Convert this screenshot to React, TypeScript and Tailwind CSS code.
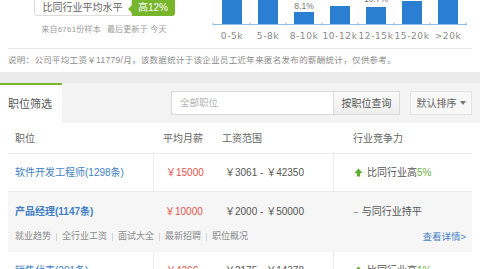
import React from 'react';

const bars = [
  { label: '0-5k', top: -12, pct: '' },
  { label: '5-8k', top: -12, pct: '' },
  { label: '8-10k', top: 12, pct: '8.1%' },
  { label: '10-12k', top: 6, pct: '' },
  { label: '12-15k', top: 7, pct: '10.7%' },
  { label: '15-20k', top: 1, pct: '' },
  { label: '>20k', top: -3, pct: '' },
];

const rows = [
  { title: '软件开发工程师(1298条)', avg: '￥15000', range: '￥3061 - ￥42350', trend: 'up', note: '比同行业高', pct: '5%' },
  { title: '产品经理(1147条)', avg: '￥10000', range: '￥2000 - ￥50000', trend: 'flat', note: '与同行业持平', pct: '', open: true },
  { title: '销售代表(201条)', avg: '￥4266', range: '￥2175 - ￥14378', trend: 'up', note: '比同行业高', pct: '1%' },
];

const subLinks = ['就业趋势', '全行业工资', '面试大全', '最新招聘', '职位概况'];

function SalaryChart() {
  const base = 24.5;
  return (
    <svg width="275" height="48" viewBox="0 0 275 48" className="block">
      <line x1="-12" y1="0" x2="-12" y2="44" stroke="#dcdcdc" strokeDasharray="1 2" />
      {bars.map((b, i) => {
        const cx = 27 + i * 36;
        return (
          <g key={b.label}>
            <rect x={cx - 10} y={b.top} width="20" height={base - b.top} fill="#2a7fd2" />
            {b.pct && (
              <text x={cx} y={i === 4 ? 2 : 9} textAnchor="middle" fontSize="8.5" fill="#777" fontFamily="Liberation Sans, sans-serif">
                {b.pct}
              </text>
            )}
            <text x={cx} y="38.5" textAnchor="middle" fontSize="9" fill="#8a8a8a" letterSpacing="0.6" fontFamily="DejaVu Sans, sans-serif">
              {b.label}
            </text>
          </g>
        );
      })}
      <line x1="8" y1={base} x2="262" y2={base} stroke="#8fbde6" strokeWidth="1.2" />
      {[8, 45, 81, 117, 153, 189, 225, 261].map((x) => (
        <line key={x} x1={x} y1={base - 2} x2={x} y2={base + 1} stroke="#8fbde6" strokeWidth="1" />
      ))}
    </svg>
  );
}

export default function App() {
  return (
    <div className="w-[480px] h-[269px] overflow-hidden bg-white font-['Liberation_Sans','Noto_Sans_CJK_SC',sans-serif] text-[#555]">
      {/* top summary */}
      <div className="h-[48px] flex">
        <div className="w-[205px] flex flex-col items-center pl-[3px]">
          <div className="flex items-stretch -mt-[3px] h-[19px]">
            <div className="w-[98px] border border-[#dcdcdc] rounded-l-[3px] bg-white flex items-center justify-center text-[10px] text-[#666] pt-[2px]">
              比同行业平均水平
            </div>
            <div className="relative bg-[#76b52c] w-[43px] rounded-r-[3px] flex items-center justify-center text-[10px] text-white pt-[2px]">
              <span className="absolute -left-[4px] top-[8px] w-0 h-0 border-y-[4px] border-y-transparent border-r-[4px] border-r-[#76b52c]" />
              高12%
            </div>
          </div>
          <div className="mt-[8px] text-[8px] text-[#9a9a9a] flex gap-[6px] tracking-[0.2px]">
            <span>来自6761份样本</span>
            <span>最后更新于 今天</span>
          </div>
        </div>
        <SalaryChart />
      </div>
      <div className="mx-[8px] border-t border-[#e8e8e8]" />
      <div className="h-[23px] px-[8px] flex items-center text-[8.5px] text-[#8a8a8a] tracking-[0.3px]">
        说明：公司平均工资￥11779/月，该数据统计于该企业员工近年来匿名发布的薪酬统计，仅供参考。
      </div>

      {/* tabs */}
      <div className="h-[11px] bg-[#ebebeb]" />
      <div className="h-[40px] bg-[#f3f3f3] flex items-stretch">
        <div className="w-[62px] bg-white border-t-2 border-[#7ab72d] flex items-center pl-[8px] text-[11px] text-[#555]">
          职位筛选
        </div>
        <div className="flex-1 flex items-center justify-end pr-[8px]">
          <div className="w-[163px] h-[24px] border border-[#dadada] bg-white flex items-center pl-[8px] text-[9.5px] text-[#b5b5b5]">
            全部职位
          </div>
          <div className="w-[66px] h-[24px] border border-l-0 border-[#dadada] bg-gradient-to-b from-[#fafafa] to-[#eeeeee] flex items-center justify-center text-[10px] text-[#555]">
            按职位查询
          </div>
          <div className="ml-[10px] w-[62px] h-[24px] border border-[#e3e3e3] bg-[#f8f8f8] flex items-center justify-center gap-[3px] text-[10px] text-[#666]">
            默认排序
            <span className="w-0 h-0 border-x-[3px] border-x-transparent border-t-[4px] border-t-[#777]" />
          </div>
        </div>
      </div>

      {/* table */}
      <div className="mx-[8px]">
        <div className="grid grid-cols-[145px_60px_120px_139px] h-[31px] items-center border-b border-[#ececec] text-[10px] text-[#666]">
          <div className="pl-[7px]">职位</div>
          <div className="pl-[10px]">平均月薪</div>
          <div className="pl-[9px]">工资范围</div>
          <div className="pl-[20px]">行业竞争力</div>
        </div>
        {rows.map((r) => (
          <div key={r.title} className={r.open ? 'bg-[#f6f6f6] h-[60px]' : 'border-b border-[#ececec]'}>
            <div className={`grid grid-cols-[145px_60px_120px_139px] text-[10px] ${r.open ? 'h-[38px] items-center' : 'h-[37px] items-stretch'}`}>
              <div className={`pl-[7px] flex items-center text-[#3f7fc6] ${r.open ? 'font-bold pt-[1px]' : ''}`}>{r.title}</div>
              <div className={`flex items-center pl-[12px] text-[#e5534b] ${r.open ? '' : 'border-l border-[#ececec]'}`}>{r.avg}</div>
              <div className="flex items-center pl-[12px] text-[#555]">{r.range}</div>
              <div className={`flex items-center pl-[20px] gap-[4px] ${r.open ? '' : 'border-l border-[#ececec]'}`}>
                {r.trend === 'up' ? (
                  <svg width="9" height="9" viewBox="0 0 10 10">
                    <path d="M5 0.5 L9.5 5.5 H6.8 V9.5 H3.2 V5.5 H0.5 Z" fill="#5fae2d" />
                  </svg>
                ) : (
                  <span className="text-[#999] tracking-[-1px]">--</span>
                )}
                <span className="text-[#555]">
                  {r.note}
                  {r.pct && <span className="text-[#6cb33a]">{r.pct}</span>}
                </span>
              </div>
            </div>
            {r.open && (
              <div className="h-[22px] flex items-start justify-between pl-[7px] pr-[6px] text-[9px]">
                <div className="flex items-center text-[#8c8c8c]">
                  {subLinks.map((s, i) => (
                    <React.Fragment key={s}>
                      {i > 0 && <span className="mx-[5px] h-[8px] border-l border-[#d5d5d5]" />}
                      <span>{s}</span>
                    </React.Fragment>
                  ))}
                </div>
                <span className="text-[#3f7fc6] text-[9.5px]">查看详情&gt;</span>
              </div>
            )}
          </div>
        ))}
      </div>
    </div>
  );
}
